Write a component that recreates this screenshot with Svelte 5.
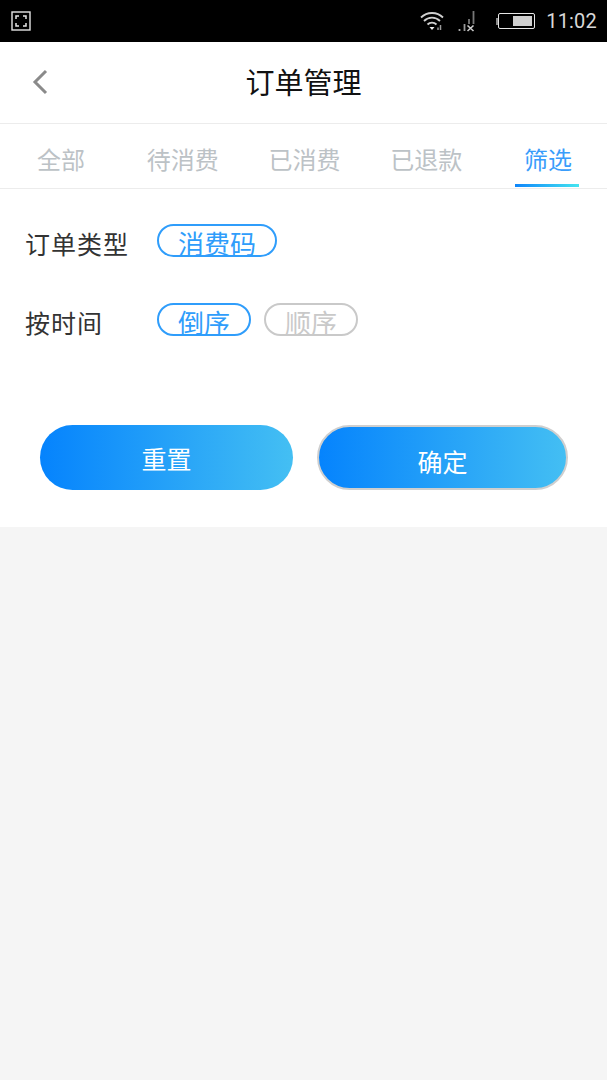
<script>
  const tabs = ['全部', '待消费', '已消费', '已退款', '筛选'];
  let active = 4;
</script>

<div class="page">
  <div class="statusbar">
    <svg class="shot" width="20" height="20" viewBox="0 0 20 20" fill="none" stroke="#e6e6e6">
      <rect x="1" y="1" width="18" height="18" stroke-width="1.4" />
      <path d="M5 8V5h3M12 5h3v3M15 12v3h-3M8 15H5v-3" stroke-width="1.5" />
    </svg>
    <div class="status-right">
      <svg width="26" height="22" viewBox="0 0 26 22" fill="none" stroke="#d0d0d0" stroke-width="1.8">
        <path d="M1 7.500C7 1.500 17 1.500 23 7.500" />
        <path d="M4 11C8.500 6.500 15.500 6.500 20 11" />
        <path d="M7.500 14.500C10 12 14 12 16.500 14.500" />
        <path d="M9.500 17h5l-2.500 3z" fill="#eee" stroke="none" />
        <path d="M18 20v-2.500M20.500 20v-5" stroke="#999" stroke-width="1.500" />
      </svg>
      <svg class="signal" width="18" height="22" viewBox="0 0 18 22" fill="none">
        <path d="M1.500 19v2" stroke="#aaa" stroke-width="1.800" />
        <path d="M6.500 14v7" stroke="#999" stroke-width="1.800" />
        <path d="M11 9v5M15.500 1v13" stroke="#777" stroke-width="1.800" />
        <path d="M9.500 15.500l6 5.500M15.500 15.500l-6 5.500" stroke="#ccc" stroke-width="1.600" />
      </svg>
      <div class="battery">
        <span class="tip"></span>
        <span class="body"><span class="level"></span></span>
      </div>
      <span class="clock">11:02</span>
    </div>
  </div>

  <header>
    <svg class="back" width="18" height="26" viewBox="0 0 18 26" fill="none" stroke="#8a8a8a" stroke-width="3">
      <path d="M15 2 L4 13 L15 24" />
    </svg>
    <h1>订单管理</h1>
  </header>

  <nav>
    {#each tabs as tab, i}
      <div class="tab" class:active={i === active}>
        <span>{tab}</span>
        {#if i === active}<i class="bar"></i>{/if}
      </div>
    {/each}
  </nav>

  <section>
    <div class="row first">
      <div class="label">订单类型</div>
      <div class="chips">
        <span class="chip on">消费码</span>
      </div>
    </div>
    <div class="row second">
      <div class="label">按时间</div>
      <div class="chips">
        <span class="chip on">倒序</span>
        <span class="chip">顺序</span>
      </div>
    </div>
    <div class="buttons">
      <button class="reset">重置</button>
      <button class="ok">确定</button>
    </div>
  </section>
</div>

<style>
  :global(body) {
    background: #f5f5f5;
  }

  .page {
    width: 607px;
    height: 1080px;
    background: #f5f5f5;
    font-family: "Noto Sans CJK SC", "Liberation Sans", sans-serif;
    overflow: hidden;
  }

  .statusbar {
    height: 42px;
    background: #000;
    display: flex;
    align-items: center;
    justify-content: space-between;
    padding: 0 10px 0 11px;
  }
  .shot {
    display: block;
  }
  .status-right {
    display: flex;
    align-items: center;
  }
  .signal {
    margin-left: 12px;
  }
  .battery {
    display: flex;
    align-items: center;
    margin-left: 20px;
  }
  .tip {
    width: 2px;
    height: 7px;
    background: #8a8a8a;
  }
  .body {
    width: 37px;
    height: 16px;
    border: 1.500px solid #e6e6e6;
    border-radius: 2px;
    display: flex;
    justify-content: flex-end;
    padding: 2px;
    box-sizing: border-box;
  }
  .level {
    width: 19px;
    background: #cfcfcf;
  }
  .clock {
    margin-left: 11px;
    color: #d8d8d8;
    font: 20px "Roboto", sans-serif;
    letter-spacing: 0.2px;
  }

  header {
    height: 81px;
    background: #fff;
    display: flex;
    align-items: center;
    justify-content: center;
    position: relative;
    border-bottom: 1px solid #ececec;
  }
  .back {
    position: absolute;
    left: 31px;
    top: 27px;
  }
  h1 {
    margin: 0 0 4px;
    font-size: 29px;
    font-weight: 400;
    color: #111;
  }

  nav {
    height: 64px;
    background: #fff;
    display: flex;
    overflow: hidden;
    border-bottom: 1px solid #ececec;
  }
  .tab {
    flex: 0 0 121.800px;
    position: relative;
    text-align: center;
    font-size: 24px;
    line-height: 70px;
    height: 64px;
    color: #bcc2c6;
  }
  .tab.active {
    color: #3a9dfb;
  }
  .bar {
    position: absolute;
    left: 28px;
    width: 64px;
    bottom: 1px;
    height: 3px;
    background: linear-gradient(90deg, #0f86fb, #45e5f0);
  }

  section {
    background: #fff;
    height: 338px;
    padding-left: 25px;
    box-sizing: border-box;
  }
  .row {
    display: flex;
    align-items: flex-start;
  }
  .first {
    padding-top: 32px;
  }
  .second {
    padding-top: 35px;
  }
  .label {
    width: 132px;
    font-size: 25px;
    line-height: 44px;
    letter-spacing: 1px;
    color: #333;
  }
  .chips {
    display: flex;
    gap: 13px;
    margin-top: 3px;
  }
  .chip {
    height: 33px;
    box-sizing: border-box;
    padding: 0 19px;
    border: 2px solid #c9c9c9;
    border-radius: 17px;
    font-size: 26px;
    line-height: 33px;
    color: #c9c9c9;
    white-space: nowrap;
  }
  .chip.on {
    border-color: #2f9dfb;
    color: #2f9dfb;
  }

  .buttons {
    display: flex;
    gap: 24px;
    padding: 81px 0 0 15px;
  }
  button {
    border: 0;
    font: inherit;
    font-size: 25px;
    color: #fff;
    background: linear-gradient(90deg, #0583fd, #44bff3);
    padding: 0;
  }
  .reset {
    width: 253px;
    height: 65px;
    border-radius: 33px;
  }
  .ok {
    width: 251px;
    height: 65px;
    border-radius: 33px;
    border: 2px solid #cfcfcf;
    background-origin: border-box;
    padding-top: 6px;
  }
</style>
